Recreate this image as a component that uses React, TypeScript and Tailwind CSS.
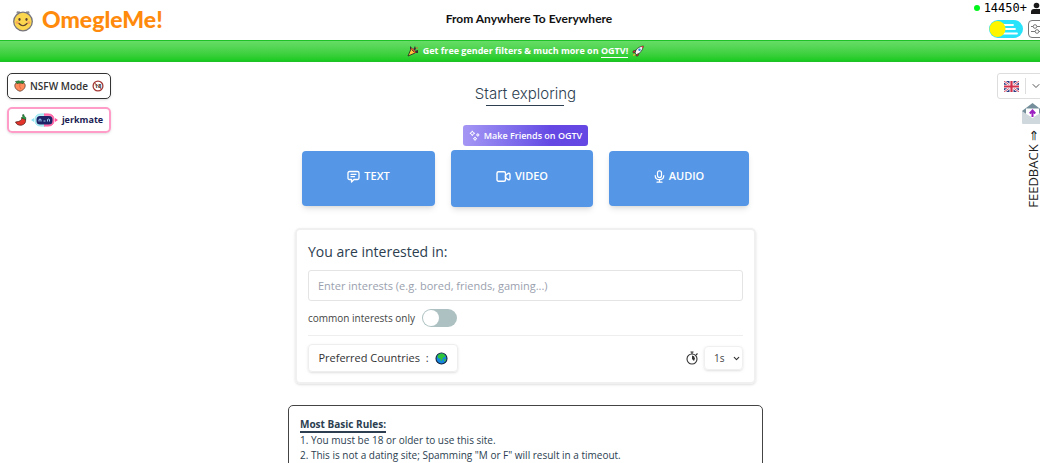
import { useState } from "react";
import { ChevronDown } from "lucide-react";

const RULES = [
  "You must be 18 or older to use this site.",
  'This is not a dating site; Spamming "M or F" will result in a timeout.',
];

export default function App() {
  const [interests, setInterests] = useState("");
  const [common, setCommon] = useState(false);
  const [wait, setWait] = useState("1s");

  return (
    <div className="h-screen overflow-hidden bg-white font-['Open_Sans',sans-serif] text-[#2c3e50]">
      {/* the page is a little wider than the window */}
      <div className="w-[calc(100%+11px)]">
        <header className="grid h-10 grid-cols-[1fr_auto_1fr] items-center pr-[5px] pl-3">
          <a href="#" className="flex items-center gap-2">
            <SmileLogo />
            <span className="pb-1 font-['Lato',sans-serif] text-[23px] leading-7 font-black text-[#ff8a0c]">OmegleMe!</span>
          </a>
          <p className="pb-1 font-['Lato',sans-serif] text-[12px] leading-5 font-bold text-[#111]">
            From Anywhere To Everywhere
          </p>
          <div className="flex flex-col items-end gap-1 pb-1">
            <div className="flex h-4 items-center gap-1 font-['DejaVu_Sans_Mono',monospace] text-[12px] leading-4 text-black">
              <span className="size-[6px] rounded-full bg-[#00f51a]" />
              14450+
              <UsersIcon />
            </div>
            <div className="flex items-center gap-[5px]">
              <button aria-label="Theme" className="h-[18px] w-[34px] overflow-hidden rounded-full">
                <SunToggle />
              </button>
              <button
                aria-label="Settings"
                className="flex size-[18px] items-center justify-center rounded border border-[#777] text-[#777]"
              >
                <SlidersIcon />
              </button>
            </div>
          </div>
        </header>

        <div className="flex h-[22px] items-center justify-center gap-1 border-y border-[#1fc226] bg-linear-to-b from-[#66dc66] to-[#16ca1e] text-[9px] font-bold text-white">
          <PartyIcon />
          <span>
            Get free gender filters &amp; much more on{" "}
            <a href="#" className="border-b border-white">OGTV!</a>
          </span>
          <RocketIcon />
        </div>

        <main className="grid grid-cols-[1fr_auto_1fr] items-start">
          <aside className="flex flex-col items-start gap-2 pt-[11px] pl-[7px]">
            <button className="flex h-[26px] w-[104px] items-center justify-center gap-1 rounded-[5px] border border-[#333] text-[10px] font-semibold text-[#333] shadow">
              <PeachIcon />
              NSFW Mode
              <EighteenIcon />
            </button>
            <a
              href="#"
              className="flex h-[26px] w-[104px] items-center justify-center gap-1 rounded-[5px] border-2 border-[#ff9dc8] text-[9px] font-bold text-[#1c1c54] shadow-sm"
            >
              <ChiliIcon />
              <RobotIcon />
              jerkmate
            </a>
          </aside>

          <div className="flex w-[475px] flex-col items-center pt-[21px]">
            <h1 className="flex flex-col items-center font-['Inter',sans-serif] text-[15px] leading-[22px] font-light">
              Start exploring
              <span className="h-px w-[78px] bg-[#2c3e50]" />
            </h1>
            <a
              href="#"
              className="mt-[19px] flex h-[21px] w-[125px] items-center justify-center gap-1 rounded-[3px] bg-linear-to-r from-[#a596f4] to-[#6548e4] to-70% text-[9px] font-semibold text-white"
            >
              <SparklesIcon />
              Make Friends on OGTV
            </a>

            <div className="mt-1 flex items-center gap-4">
              <ModeBtn label="TEXT" icon={<ChatIcon />} size="h-[55px] w-[133px]" />
              <ModeBtn label="VIDEO" icon={<VideoIcon />} size="h-[57px] w-[142px]" />
              <ModeBtn label="AUDIO" icon={<MicIcon />} size="h-[55px] w-[140px]" />
            </div>

            <section className="mt-[21px] w-[461px] rounded-[5px] border-2 border-[#f0f0f0] px-[11px] pt-3 pb-[10px] shadow-sm">
              <h2 className="text-[14px] leading-5 font-normal">
                <label htmlFor="interests">You are interested in:</label>
              </h2>
              <input
                id="interests"
                type="text"
                value={interests}
                onChange={(e) => setInterests(e.target.value)}
                placeholder="Enter interests (e.g. bored, friends, gaming...)"
                className="mt-2 h-[31px] w-full rounded-[3px] border border-[#e4e4e4] px-[9px] text-[11px] placeholder:text-[#9a9fae]"
              />
              <div className="mt-2 flex h-[18px] items-center gap-[7px] text-[10px] text-[#444]">
                <label htmlFor="common">common interests only</label>
                <input
                  id="common"
                  type="checkbox"
                  role="switch"
                  checked={common}
                  onChange={(e) => setCommon(e.target.checked)}
                  className="h-[18px] w-[35px] appearance-none rounded-full bg-[#adc1c2] p-px before:block before:size-4 before:rounded-full before:bg-white checked:bg-[#5596e6] checked:before:ml-auto"
                />
              </div>
              <div className="mt-2 flex items-center justify-between border-t border-[#eeeeee] pt-2">
                <button className="flex h-7 w-[150px] items-center justify-center gap-[6px] rounded border border-[#eeeeee] text-[11px] text-[#333] shadow">
                  Preferred Countries&nbsp; :
                  <GlobeIcon />
                </button>
                <div className="flex items-center gap-[5px]">
                  <StopwatchIcon />
                  <div className="relative">
                    <select
                      aria-label="Wait time"
                      value={wait}
                      onChange={(e) => setWait(e.target.value)}
                      className="block h-6 w-[39px] appearance-none rounded border border-[#f0f0f0] pl-[9px] text-[10px] text-[#444] shadow"
                    >
                      <option>1s</option>
                      <option>5s</option>
                      <option>10s</option>
                    </select>
                    <ChevronDown size={9} strokeWidth={3} className="pointer-events-none absolute top-2 right-[2px] text-[#333]" />
                  </div>
                </div>
              </div>
            </section>

            <section className="mt-[21px] w-full rounded-[5px] border-[1.5px] border-[#444] px-[11px] pt-[11px] pb-5 text-[10px] leading-[15px]">
              <h3 className="mb-[2px] leading-[14px] font-bold">
                <span className="border-b-2 border-[#2c3e50]">Most Basic Rules:</span>
              </h3>
              {RULES.map((rule, i) => (
                <p key={rule}>
                  {i + 1}. {rule}
                </p>
              ))}
            </section>
          </div>

          <aside className="flex flex-col items-end pt-[11px]">
            <button
              aria-label="Language"
              className="flex h-[26px] w-[54px] items-center gap-1 rounded-[3px] border border-[#dddddd] pl-[6px]"
            >
              <FlagIcon />
              <span className="ml-[2px] h-4 w-px bg-[#dddddd]" />
              <ChevronDown size={12} strokeWidth={2} className="shrink-0 text-[#555]" />
            </button>
            <a href="#" className="mt-1 flex flex-col items-center gap-[6px] pr-2">
              <EnvelopeIcon />
              <span className="rotate-180 text-[13px] leading-[14px] text-[#222] [writing-mode:vertical-rl]">
                FEEDBACK ⇒
              </span>
            </a>
          </aside>
        </main>
      </div>
    </div>
  );
}

function ModeBtn({ label, icon, size }: { label: string; icon: React.ReactNode; size: string }) {
  return (
    <button
      className={`flex items-center justify-center gap-1 rounded bg-[#5596e6] pb-1 text-[11px] font-semibold text-white shadow-md ${size}`}
    >
      {icon}
      {label}
    </button>
  );
}

function SmileLogo() {
  return (
    <svg width="22" height="22" viewBox="0 0 22 22" fill="none">
      <path d="M5 3.500 5.500 2 8 2.200M17 3.500 16.500 2 14 2.200" stroke="#8b8b94" strokeWidth="1.500" />
      <circle cx="11" cy="11.500" r="9.300" fill="#fbd64f" stroke="#77757c" strokeWidth="1.300" />
      <ellipse cx="7.500" cy="9.500" rx="1.100" ry="1.400" fill="#5b4030" />
      <ellipse cx="14.500" cy="9.500" rx="1.100" ry="1.400" fill="#5b4030" />
      <circle cx="5.200" cy="12.500" r="1.500" fill="#f9a95a" />
      <circle cx="16.800" cy="12.500" r="1.500" fill="#f9a95a" />
      <path d="M7 13.500q4 4.500 8 0" stroke="#5b4030" strokeWidth="1.200" strokeLinecap="round" />
    </svg>
  );
}

function UsersIcon() {
  return (
    <svg width="15" height="13" viewBox="0 0 15 13" fill="#1a1a1a">
      <circle cx="5.500" cy="3.500" r="2.800" />
      <path d="M0 12V10q0-3 3-3h5q3 0 3 3v2z" />
      <path d="M9 1a2.600 2.600 0 1 1 0 5M12 12V9l-1-2q4 0 4 3v2z" />
    </svg>
  );
}

function SunToggle() {
  return (
    <svg width="34" height="18" viewBox="0 0 34 18">
      <rect width="34" height="18" fill="#29e3fa" />
      <g stroke="#fff" strokeLinecap="round" strokeWidth="1.800">
        <path d="M14 5h10M15 9h11M14 13.500h14" />
      </g>
      <circle cx="8.500" cy="9" r="8" fill="#fff500" />
    </svg>
  );
}

function SlidersIcon() {
  return (
    <svg width="14" height="12" viewBox="0 0 14 12" fill="none" stroke="currentColor">
      <path d="M1 3.500h2M7 3.500h6M1 8.500h4M9 8.500h4" />
      <circle cx="5" cy="3.500" r="1.800" />
      <circle cx="7" cy="8.500" r="1.800" />
    </svg>
  );
}

function PartyIcon() {
  return (
    <svg width="12" height="12" viewBox="0 0 12 12">
      <path d="M1 11 4 4l4 4z" fill="#ffc83d" stroke="#222" strokeWidth=".8" />
      <path d="M3 4 3 1l3 3zM6 5l2-4 1 3-2 2zM7 6l4-1v3L8 8z" fill="#333" />
      <path d="M4 4q3 0 4 4" stroke="#e2572b" strokeWidth="1.400" fill="none" />
      <circle cx="10" cy="3" r=".8" fill="#e2572b" />
    </svg>
  );
}

function RocketIcon() {
  return (
    <svg width="12" height="12" viewBox="0 0 12 12">
      <path d="M4 5 1 6 1 8l2-.5zM7 8l-1 3H4l.5-2z" fill="#e03a3a" stroke="#222" strokeWidth=".5" />
      <path d="M3 8q1-6 8.400-7Q10 8 4.500 9.500z" fill="#f7f7f7" stroke="#222" strokeWidth=".7" />
      <path d="M9 1.200 11.400 1 11 3.500z" fill="#e03a3a" />
      <circle cx="7.500" cy="4.700" r="1.200" fill="#2b82d9" />
      <path d="m1 11 .8-2.500L3.500 10z" fill="#ffb02e" />
    </svg>
  );
}

function PeachIcon() {
  return (
    <svg width="12" height="12" viewBox="0 0 12 12">
      <path d="M6 11.300C2 10 .8 7.500.8 5.500 1 2.500 4 2 6 3.200 8 2 11 2.500 11.200 5.500 11.200 7.500 10 10 6 11.300z" fill="#ff8d5c" stroke="#4b2a1e" strokeWidth=".7" />
      <path d="M6 3.500Q5 7 7 9" stroke="#d9552f" strokeWidth=".7" fill="none" />
      <path d="M1.500 1.500 5 .8 6 1.500 8 .7 10.500 1.500 9 3.500 6 2.800 3 3.500z" fill="#319b42" stroke="#1c4723" strokeWidth=".6" />
    </svg>
  );
}

function EighteenIcon() {
  return (
    <svg width="12" height="12" viewBox="0 0 12 12">
      <circle cx="6" cy="6" r="4.900" fill="#fff" stroke="#a33a36" strokeWidth="1.300" />
      <text x="6" y="8.300" textAnchor="middle" fontSize="6" fontWeight="700" fill="#333">18</text>
      <path d="m2.500 2.500 7 7" stroke="#a33a36" strokeWidth=".7" />
    </svg>
  );
}

function ChiliIcon() {
  return (
    <svg width="12" height="12" viewBox="0 0 12 12">
      <path d="M7 3.500q0 4-6.500 4.500 1.500 3.700 6 3.200Q11.500 10 10.500 5z" fill="#e3342b" stroke="#4a1510" strokeWidth=".7" />
      <path d="m6.300 4 1.500-1.500L7.500.8 8.800.5l.5 1.800 1.500 1.200v2L9 5z" fill="#2f9d46" stroke="#173f20" strokeWidth=".5" />
    </svg>
  );
}

function RobotIcon() {
  return (
    <svg width="27" height="14" viewBox="0 0 27 14">
      <path d="M14 1H10Q4 1 4 7t6 6h4" fill="#bff3f7" stroke="#8fe3ee" />
      <path d="M13 1h4q6 0 6 6t-6 6h-4" fill="#ff7db4" stroke="#ff4f99" />
      <path d="M0 7 3 5v4z" fill="#8fe3ee" />
      <path d="M27 7 24 5v4z" fill="#ff4f99" />
      <rect x="5.500" y="3" width="16" height="8.500" rx="3.500" fill="#1e2266" />
      <g fill="none" stroke="#9fd2f7">
        <path d="M8 8.500V6.500q1-1 2 0v2M16.500 8.500V6.500q1-1 2 0v2M12.500 8h2" />
      </g>
    </svg>
  );
}

function SparklesIcon() {
  return (
    <svg width="11" height="11" viewBox="0 0 10 10" fill="none" stroke="#fff" strokeWidth=".9" strokeLinejoin="round">
      <path d="m3 .8.700 1.500 1.500.700-1.500.700L3 5.200l-.700-1.500L.8 3l1.500-.700z" />
      <path d="m8 3.200.400.900.900.400-.900.400L8 5.800l-.400-.9-.9-.4.900-.4z" />
      <path d="m5.500 6.300.500 1.100 1.100.500-1.100.500-.5 1.100-.5-1.100-1.100-.5 1.100-.5z" />
    </svg>
  );
}

function ChatIcon() {
  return (
    <svg width="13" height="13" viewBox="0 0 13 13" fill="none" stroke="#fff" strokeWidth="1.300" strokeLinejoin="round" strokeLinecap="round">
      <path d="M2.500 1.500h8q1.500 0 1.500 1.500v5q0 1.500-1.500 1.500H7L4.500 12V9.500h-2Q1 9.500 1 8V3q0-1.500 1.500-1.500z" />
      <path d="M4 4.300h5M4 6.700h3.500" />
    </svg>
  );
}

function VideoIcon() {
  return (
    <svg width="15" height="13" viewBox="0 0 15 13" fill="none" stroke="#fff" strokeWidth="1.400" strokeLinejoin="round">
      <rect x="1" y="1.800" width="8.500" height="9.400" rx="1.500" />
      <path d="M9.500 5.500 12 3.500q2-.8 2 1v4q0 1.800-2 1L9.500 7.500z" />
    </svg>
  );
}

function MicIcon() {
  return (
    <svg width="11" height="13" viewBox="0 0 11 13" fill="none" stroke="#fff" strokeWidth="1.200" strokeLinecap="round">
      <rect x="3.500" y=".8" width="4" height="6.800" rx="2" />
      <path d="M1.200 5.500q0 4.200 4.300 4.200t4.300-4.200M5.500 9.700v2.500M3 12.200h5" />
    </svg>
  );
}

function GlobeIcon() {
  return (
    <svg width="13" height="13" viewBox="0 0 13 13">
      <circle cx="6.500" cy="6.500" r="5.500" fill="#1685e0" stroke="#15233a" strokeWidth="1.100" />
      <path d="M2.500 3.500Q5 .9 8.500 1.800l2 2-.5 1.500-2 .2-.5 2L6 9.500 5.500 7 3 6z" fill="#2fc53b" />
      <path d="m9 7 2 .2-1 2.300-1-.5z" fill="#2fc53b" />
    </svg>
  );
}

function StopwatchIcon() {
  return (
    <svg width="13" height="14" viewBox="0 0 13 14" fill="none" stroke="#333" strokeWidth="1.100">
      <circle cx="6" cy="8" r="5" />
      <path d="M6 3V1M4.500 1h3M10 4l1.500-1.500" />
      <path d="M6 8V4.500q2.500.2 3 3L8 10z" fill="#333" stroke="none" />
    </svg>
  );
}

function FlagIcon() {
  return (
    <svg width="15" height="11" viewBox="0 0 15 12" preserveAspectRatio="none" className="shrink-0">
      <rect width="15" height="12" rx="1" fill="#2b3a80" />
      <path d="m0 0 15 12M15 0 0 12" stroke="#fff" strokeWidth="2.400" />
      <path d="m0 0 15 12M15 0 0 12" stroke="#d2304a" strokeWidth=".9" />
      <path d="M7.500 0v12M0 6h15" stroke="#fff" strokeWidth="4" />
      <path d="M7.500 0v12M0 6h15" stroke="#d2304a" strokeWidth="2.200" />
    </svg>
  );
}

function EnvelopeIcon() {
  return (
    <svg width="21" height="21" viewBox="0 0 21 21">
      <path d="M0 8 10.500 0 21 8v6H0z" fill="#748f9b" />
      <path d="m0 8 10.500 7L21 8v12q0 1-1 1H1q-1 0-1-1z" fill="#cfd8dc" />
      <path d="M4 5.500h13V11l-6.500 4L4 11z" fill="#fff" />
      <path d="M10.500 14V8.500M7.800 10.500l2.700-3 2.700 3" fill="none" stroke="#9c1fc2" strokeWidth="2" />
    </svg>
  );
}
